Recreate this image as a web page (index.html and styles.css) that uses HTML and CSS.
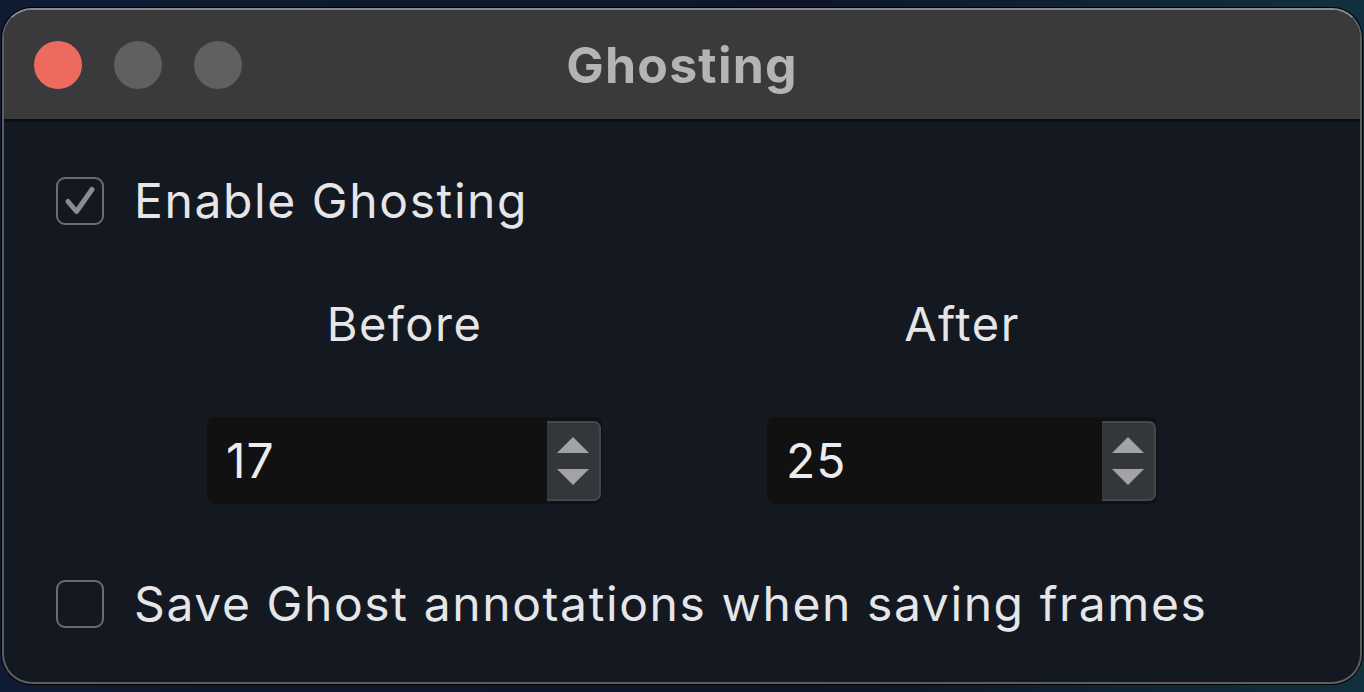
FILE: index.html
```html
<!DOCTYPE html>
<html lang="en">
<head>
  <meta charset="UTF-8" />
  <title>Ghosting</title>
  <link rel="stylesheet" href="styles.css">
</head>
<body>

<!-- Window -->
<div class="window">
  <div class="titlebar">
    <div class="lights">
      <span class="light close"></span>
      <span class="light"></span>
      <span class="light"></span>
    </div>
    <div class="title">Ghosting</div>
  </div>

  <div class="content">
    <label class="check-row">
      <span class="box">
        <svg width="48" height="48" viewBox="0 0 48 48">
          <path d="M12 24.5 L20.5 34.5 L36 12.5" fill="none" stroke="#8c8c8e" stroke-width="5" stroke-linecap="round" stroke-linejoin="round"/>
        </svg>
      </span>
      <span class="check-label">Enable Ghosting</span>
    </label>

    <div class="columns">
      <div class="col">
        <div class="col-label">Before</div>
        <div class="spinner">
          <span class="value">17</span>
          <span class="stepper">
            <span class="arrow up"></span>
            <span class="arrow down"></span>
          </span>
        </div>
      </div>
      <div class="col">
        <div class="col-label">After</div>
        <div class="spinner">
          <span class="value">25</span>
          <span class="stepper">
            <span class="arrow up"></span>
            <span class="arrow down"></span>
          </span>
        </div>
      </div>
    </div>

    <label class="check-row last">
      <span class="box"></span>
      <span class="check-label">Save Ghost annotations when saving frames</span>
    </label>
  </div>
</div>

</body>
</html>
```

FILE: styles.css
```css
body {
  margin: 0;
  height: 692px;
  overflow: hidden;
  background: linear-gradient(90deg, #0f1b33, #0c1628 60%, #123040);
  font-family: Inter, "Noto Sans", sans-serif;
}

.window {
  box-sizing: border-box;
  margin: 8px 2px 0 2px;
  height: 676px;
  border: 2px solid #5e5e60;
  border-top-color: #8a8a8c;
  border-radius: 30px;
  overflow: hidden;
  background: #131821;
  box-shadow: 0 0 0 1px #000;
}

.titlebar {
  height: 109px;
  background: #3a3a3c;
  border-bottom: 3px solid #0c0d10;
  display: flex;
  align-items: center;
  position: relative;
}

.lights {
  display: flex;
  gap: 32px;
  padding-left: 30px;
}

.light {
  width: 48px;
  height: 48px;
  border-radius: 50%;
  background: #606062;
}

.light.close {
  background: #ec6a5e;
}

.title {
  position: absolute;
  left: 0;
  right: 0;
  text-align: center;
  font-size: 50px;
  font-weight: 700;
  color: #b4b4b6;
  letter-spacing: 1.2px;
}

.content {
  padding: 49px 0 0 52px;
}

.check-row {
  display: flex;
  align-items: center;
  gap: 30px;
}

.check-row.last {
  margin-top: 70px;
}

.box {
  box-sizing: border-box;
  width: 48px;
  height: 48px;
  border: 2px solid #6c6c6e;
  border-radius: 9px;
  display: flex;
  align-items: center;
  justify-content: center;
}

.box svg {
  display: block;
  margin: -2px;
}

.check-label {
  font-size: 48px;
  color: #e6e6e8;
  letter-spacing: 1.6px;
}

.columns {
  display: flex;
  gap: 165px;
  padding-left: 151px;
  margin-top: 66px;
}

.col {
  width: 395px;
  display: flex;
  flex-direction: column;
  align-items: center;
}

.col + .col {
  width: 390px;
}

.col-label {
  font-size: 47px;
  line-height: 56px;
  color: #e6e6e8;
  letter-spacing: 1.5px;
}

.spinner {
  margin-top: 65px;
  width: 100%;
  height: 87px;
  background: #111112;
  border-radius: 8px;
  display: flex;
  align-items: center;
  justify-content: space-between;
}

.value {
  padding-left: 19px;
  font-size: 48px;
  color: #ececee;
  letter-spacing: 1px;
}

.stepper {
  box-sizing: border-box;
  width: 54px;
  height: 80px;
  margin-right: 1px;
  background: #33363b;
  border: 2px solid #44474c;
  border-left: none;
  border-radius: 0 7px 7px 0;
  display: flex;
  flex-direction: column;
  align-items: center;
  justify-content: center;
  gap: 16px;
}

.arrow {
  width: 0;
  height: 0;
  border-left: 16px solid transparent;
  border-right: 16px solid transparent;
}

.arrow.up {
  border-bottom: 16px solid #a3a3a5;
}

.arrow.down {
  border-top: 16px solid #a3a3a5;
}
```
